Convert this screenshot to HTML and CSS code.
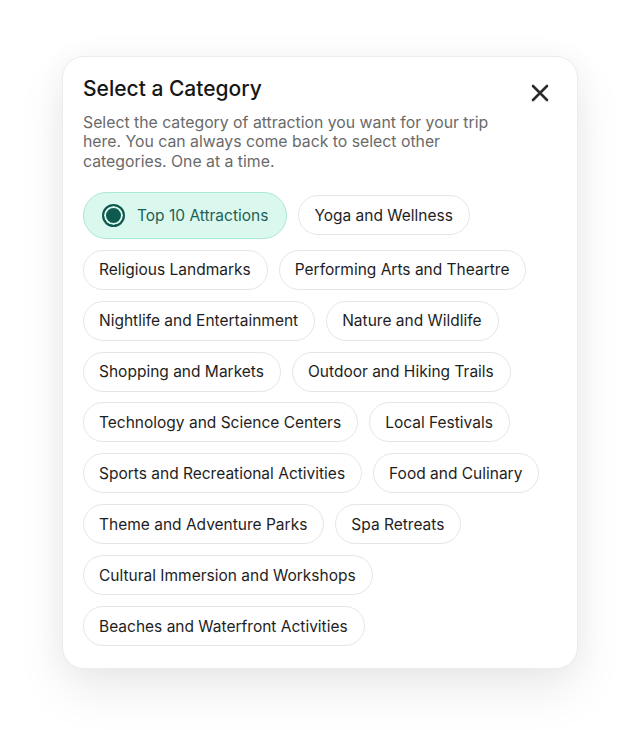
FILE: index.html
```html
<!DOCTYPE html>
<html lang="en">
<head>
    <meta charset="UTF-8">
    <meta name="viewport" content="width=device-width, initial-scale=1.0">
    <title>Select a Category</title>
    <link rel="stylesheet" href="styles.css">
</head>
<body>
    <div class="modal">
        <div class="modal-head">
            <h1 class="title">Select a Category</h1>
            <button class="close" type="button" aria-label="Close">
                <svg width="18" height="18" viewBox="0 0 18 18">
                    <path d="M2 2 L16 16 M16 2 L2 16" stroke="#2b2b2b" stroke-width="2.6" stroke-linecap="round"/>
                </svg>
            </button>
        </div>
        <p class="desc">Select the category of attraction you want for your trip here. You can always come back to select other categories. One at a time.</p>
        <div class="chips">
            <div class="chip selected"><span class="radio"></span>Top 10 Attractions</div>
            <div class="chip">Yoga and Wellness</div>
            <div class="chip">Religious Landmarks</div>
            <div class="chip">Performing Arts and Theartre</div>
            <div class="chip">Nightlife and Entertainment</div>
            <div class="chip">Nature and Wildlife</div>
            <div class="chip">Shopping and Markets</div>
            <div class="chip">Outdoor and Hiking Trails</div>
            <div class="chip">Technology and Science Centers</div>
            <div class="chip">Local Festivals</div>
            <div class="chip">Sports and Recreational Activities</div>
            <div class="chip">Food and Culinary</div>
            <div class="chip">Theme and Adventure Parks</div>
            <div class="chip">Spa Retreats</div>
            <div class="chip">Cultural Immersion and Workshops</div>
            <div class="chip">Beaches and Waterfront Activities</div>
        </div>
    </div>
</body>
</html>
```

FILE: styles.css
```css
html {
    background: #ffffff;
}

body {
    margin: 0;
    min-height: 735px;
    box-sizing: border-box;
    font-family: Inter, "Noto Sans", sans-serif;
    padding: 56px 0 0 62px;
}

.modal {
    width: 516px;
    box-sizing: border-box;
    background: #ffffff;
    border: 1px solid #ececec;
    border-radius: 22px;
    padding: 18px 20px 22px 20px;
    box-shadow: 0 22px 50px rgba(0,0,0,0.08), 0 0 30px rgba(0,0,0,0.04);
}

.modal-head {
    display: flex;
    justify-content: space-between;
    align-items: center;
}

.title {
    margin: 0;
    font-size: 21px;
    font-weight: 500;
    color: #161616;
    line-height: 28px;
}

.close {
    border: none;
    background: none;
    padding: 0;
    margin: 8px 8px 0 0;
    width: 18px;
    height: 18px;
    cursor: pointer;
}

.desc {
    margin: 10px 0 21px 0;
    max-width: 430px;
    font-size: 15.8px;
    line-height: 19.3px;
    color: #6a6a6a;
}

.chips {
    display: flex;
    flex-wrap: wrap;
    align-items: center;
    column-gap: 11px;
    row-gap: 10.9px;
}

.chip {
    display: flex;
    align-items: center;
    height: 40px;
    box-sizing: border-box;
    padding: 0 16px 0 15px;
    border: 1px solid #e6e6e6;
    border-radius: 20px;
    font-size: 15.5px;
    color: #1e1e1e;
    white-space: nowrap;
}

.chip.selected {
    height: 47px;
    border-radius: 24px;
    padding: 0 18px;
    background: #dbf8ef;
    border-color: #a9e8d2;
    color: #1e5f56;
}

.radio {
    width: 23px;
    height: 23px;
    box-sizing: border-box;
    border: 2px solid #0f5a4e;
    border-radius: 50%;
    background: #0f5a4e;
    box-shadow: inset 0 0 0 2px #dbf8ef;
    margin-right: 12px;
}
```
